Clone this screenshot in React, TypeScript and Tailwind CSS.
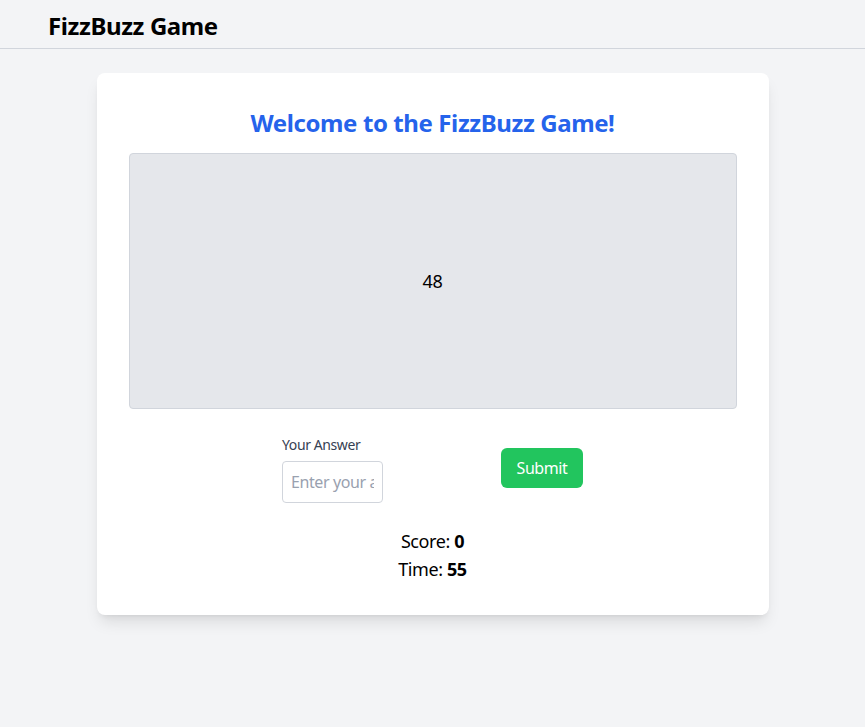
import React from "react";

export default function App() {
  return (
    <div className="min-h-screen bg-[#f3f4f6] text-black tracking-[-0.025em]" style={{ fontFamily: '"Noto Sans", "Open Sans", sans-serif' }}>
      <header className="border-b border-gray-300 px-12 h-[49px] flex items-center">
        <h1 className="text-2xl font-bold leading-8 pt-[3px]">FizzBuzz Game</h1>
      </header>
      <main className="pt-6">
        <div className="mx-auto max-w-2xl bg-white rounded-lg shadow-lg p-8">
          <h2 className="text-2xl font-bold text-[#2563eb] text-center mb-[14px] pt-[2px] leading-8">Welcome to the FizzBuzz Game!</h2>
          <div className="h-64 bg-[#e5e7eb] border border-gray-300 rounded flex items-center justify-center text-lg">
            48
          </div>
          <div className="mt-6 flex justify-center items-center gap-[118px]">
            <div className="flex flex-col">
              <label className="text-sm text-gray-700 mb-[6px] leading-5 pt-[2px]">Your Answer</label>
              <input
                type="text"
                placeholder="Enter your answer"
                className="w-[101px] h-[42px] px-2 border border-gray-300 rounded text-base placeholder:text-gray-400 outline-none"
              />
            </div>
            <button className="w-[82px] h-10 bg-[#22c55e] text-white rounded-md text-base">Submit</button>
          </div>
          <div className="mt-6 text-center text-lg leading-7">
            <p>Score: <span className="font-bold">0</span></p>
            <p>Time: <span className="font-bold">55</span></p>
          </div>
        </div>
      </main>
    </div>
  );
}
